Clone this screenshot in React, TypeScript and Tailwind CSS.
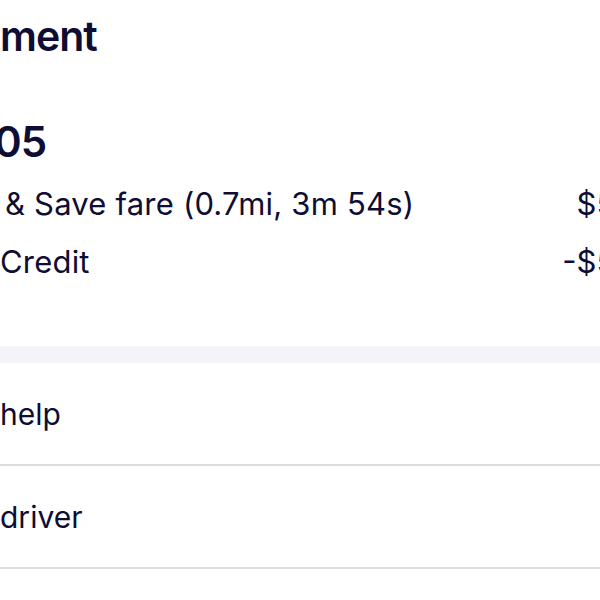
const ink = "text-[#0e0d33]";

function FareLine({ label, amount }: { label: string; amount: string }) {
  return (
    <div className="flex items-baseline justify-between">
      <span className={`text-[31px] leading-[30px] tracking-[0.2px] ${ink}`}>{label}</span>
      <span className={`text-[31px] leading-[30px] ${ink}`}>{amount}</span>
    </div>
  );
}

function ActionRow({ label }: { label: string }) {
  return (
    <div className="flex h-[103px] items-center border-b-2 border-[#dcdce1]">
      <span className={`text-[30px] leading-[30px] ${ink}`}>{label}</span>
    </div>
  );
}

export default function App() {
  return (
    <div className="h-[600px] w-full overflow-hidden bg-white font-['Inter',sans-serif]">
      <div className="w-[661px]">
        <div className="pt-[15px]">
          <h1 className={`text-[41px] font-semibold leading-[42px] tracking-[-1px] ${ink}`}>ment</h1>
          <p className={`-ml-[6px] mt-[64px] text-[42px] font-semibold leading-[42px] tracking-[-1px] ${ink}`}>05</p>
        </div>

        <div className="mt-[26px] pl-[5px]">
          <FareLine label="& Save fare (0.7mi, 3m 54s)" amount="$5.05" />
        </div>
        <div className="mt-[28px]">
          <FareLine label="Credit" amount="-$5.05" />
        </div>

        <div className="mt-[69px] h-[17px] bg-[#f4f4f8]" />

        <ActionRow label="help" />
        <ActionRow label="driver" />
        <div className="h-[40px]" />
      </div>
    </div>
  );
}
